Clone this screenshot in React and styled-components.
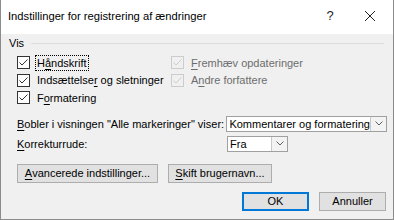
import React from "react";
import styled, { createGlobalStyle } from "styled-components";

const GlobalStyle = createGlobalStyle`
  body {
    margin: 0;
    background: #ffffff;
    font-family: "Liberation Sans", Arial, sans-serif;
  }
`;

const Dialog = styled.div`
  width: 394px;
  height: 220px;
  box-sizing: border-box;
  border: 1px solid #8c8c8c;
  border-top: none;
  background: #f0f0f0;
  display: flex;
  flex-direction: column;
  font-size: 11px;
  color: #000;
  overflow: hidden;
`;

const TitleBar = styled.div`
  height: 34px;
  flex: none;
  background: #ffffff;
  display: flex;
  align-items: center;
  padding-left: 7px;
  padding-bottom: 3px;
  box-sizing: border-box;
`;

const Title = styled.div`
  flex: 1;
  font-size: 11.2px;
`;

const TitleButton = styled.div`
  width: ${(p) => p.$w}px;
  display: flex;
  justify-content: center;
  align-items: center;
  font-size: 13px;
  color: #222;
`;

const Body = styled.div`
  flex: 1;
  padding: 1px 6px 0 8px;
  display: flex;
  flex-direction: column;
`;

const GroupHeader = styled.div`
  height: 14px;
  display: flex;
  align-items: center;
  gap: 7px;
  margin-top: 1px;
`;

const Rule = styled.div`
  flex: 1;
  height: 1px;
  background: #dcdcdc;
  margin-right: 3px;
`;

const Options = styled.div`
  display: grid;
  grid-template-columns: 154px 1fr;
  grid-auto-rows: 17.5px;
  padding-left: 8px;
  margin-top: 4px;
`;

const Option = styled.div`
  display: flex;
  align-items: center;
  gap: 6px;
  color: ${(p) => (p.$disabled ? "#6d6d6d" : "#000")};
`;

const Box = styled.span`
  width: 13px;
  height: 13px;
  box-sizing: border-box;
  border: 1px solid ${(p) => (p.$disabled ? "#cccccc" : "#333333")};
  background: ${(p) => (p.$disabled ? "transparent" : "#ffffff")};
  display: flex;
  flex: none;
`;

const Label = styled.span`
  padding: 0 1px;
  line-height: 14px;
  white-space: nowrap;
  outline: ${(p) => (p.$focus ? "1px dotted #000" : "none")};
  outline-offset: 0px;
`;

const Key = styled.span`
  text-decoration: underline;
  text-underline-offset: 2px;
`;

const FormRows = styled.div`
  display: flex;
  flex-direction: column;
  gap: 4px;
  margin-top: 9px;
  padding-left: 8px;
`;

const FormRow = styled.div`
  display: flex;
  align-items: center;
`;

const FormLabel = styled.div`
  width: 210px;
  white-space: nowrap;
`;

const Select = styled.div`
  width: ${(p) => p.$w}px;
  height: 16px;
  box-sizing: border-box;
  border: 1px solid #a0a0a0;
  background: #ffffff;
  display: flex;
  align-items: stretch;
`;

const SelectValue = styled.div`
  flex: 1;
  padding-left: 2px;
  line-height: 14px;
  white-space: nowrap;
  overflow: hidden;
`;

const SelectArrow = styled.div`
  width: 15px;
  border-left: 1px solid #c8c8c8;
  background: #f3f3f3;
  display: flex;
  align-items: center;
  justify-content: center;
`;

const ButtonRow = styled.div`
  display: flex;
  gap: 10px;
  justify-content: ${(p) => (p.$end ? "flex-end" : "flex-start")};
  padding-left: ${(p) => (p.$end ? 0 : 8)}px;
  padding-right: ${(p) => (p.$end ? 1 : 0)}px;
  margin-top: ${(p) => p.$top}px;
`;

const Button = styled.div`
  width: ${(p) => (p.$w ? `${p.$w}px` : "auto")};
  height: 19px;
  box-sizing: border-box;
  padding: 0 4px;
  border: ${(p) => (p.$default ? "2px solid #0078d7" : "1px solid #adadad")};
  background: #e1e1e1;
  display: flex;
  align-items: center;
  justify-content: center;
  white-space: nowrap;
`;

const Check = ({ disabled }) => (
  <Box $disabled={disabled}>
    <svg width="11" height="11" viewBox="0 0 11 11">
      <path
        d="M1.5 5.5 L4 8 L9.5 2.5"
        fill="none"
        stroke={disabled ? "#cccccc" : "#333333"}
        strokeWidth="1"
      />
    </svg>
  </Box>
);

const Chevron = () => (
  <svg width="8" height="5" viewBox="0 0 8 5">
    <path d="M0.5 0.5 L4 4 L7.5 0.5" fill="none" stroke="#606060" strokeWidth="1" />
  </svg>
);

export default function App() {
  return (
    <>
      <GlobalStyle />
      <Dialog>
        <TitleBar>
          <Title>Indstillinger for registrering af ændringer</Title>
          <TitleButton $w={34}>?</TitleButton>
          <TitleButton $w={46}>
            <svg width="12" height="12" viewBox="0 0 12 12">
              <path d="M1 1 L11 11 M11 1 L1 11" stroke="#222" strokeWidth="1" />
            </svg>
          </TitleButton>
        </TitleBar>
        <Body>
          <GroupHeader>
            <span>Vis</span>
            <Rule />
          </GroupHeader>
          <Options>
            <Option>
              <Check />
              <Label $focus>
                H<Key>å</Key>ndskrift
              </Label>
            </Option>
            <Option $disabled>
              <Check disabled />
              <Label>
                <Key>F</Key>remhæv opdateringer
              </Label>
            </Option>
            <Option>
              <Check />
              <Label>
                Indsættelse<Key>r</Key> og sletninger
              </Label>
            </Option>
            <Option $disabled>
              <Check disabled />
              <Label>
                A<Key>n</Key>dre forfattere
              </Label>
            </Option>
            <Option>
              <Check />
              <Label>
                F<Key>o</Key>rmatering
              </Label>
            </Option>
          </Options>
          <FormRows>
            <FormRow>
              <FormLabel>
                <Key>B</Key>obler i visningen "Alle markeringer" viser:
              </FormLabel>
              <Select $w={161}>
                <SelectValue>Kommentarer og formatering</SelectValue>
                <SelectArrow>
                  <Chevron />
                </SelectArrow>
              </Select>
            </FormRow>
            <FormRow>
              <FormLabel>
                <Key>K</Key>orrekturrude:
              </FormLabel>
              <Select $w={61}>
                <SelectValue>Fra</SelectValue>
                <SelectArrow>
                  <Chevron />
                </SelectArrow>
              </Select>
            </FormRow>
          </FormRows>
          <ButtonRow $top={12}>
            <Button $w={141}>
              <Key>A</Key>vancerede indstillinger...
            </Button>
            <Button $w={104}>
              <Key>S</Key>kift brugernavn...
            </Button>
          </ButtonRow>
          <ButtonRow $end $top={9}>
            <Button $w={67} $default>
              OK
            </Button>
            <Button $w={67}>Annuller</Button>
          </ButtonRow>
        </Body>
      </Dialog>
    </>
  );
}
